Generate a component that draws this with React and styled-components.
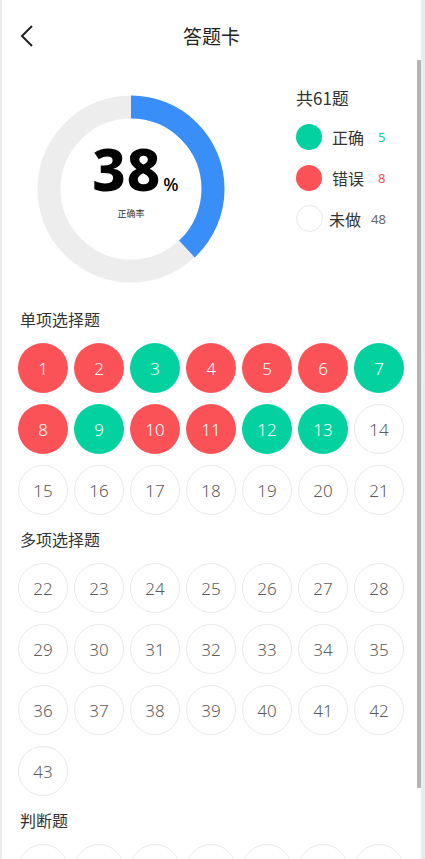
import * as React from "react";
import styled, { createGlobalStyle } from "styled-components";

const GlobalStyle = createGlobalStyle`
  html, body {
    margin: 0;
    padding: 0;
    background: #ececec;
    font-family: "Noto Sans", "Noto Sans CJK SC", sans-serif;
  }
`;

const colors = {
  right: "#03d19f",
  wrong: "#fb5258",
  blue: "#3a8ef8",
  track: "#ededed",
};

const sections = [
  {
    title: "单项选择题",
    from: 1,
    to: 21,
    status: { 1: "wrong", 2: "wrong", 3: "right", 4: "wrong", 5: "wrong", 6: "wrong", 7: "right", 8: "wrong", 9: "right", 10: "wrong", 11: "wrong", 12: "right", 13: "right" },
  },
  { title: "多项选择题", from: 22, to: 43, status: {} },
  { title: "判断题", from: 44, to: 50, status: {} },
];

const range = (a, b) => Array.from({ length: b - a + 1 }, (_, i) => a + i);

const Donut = ({ percent }) => {
  const r = 82;
  const c = 2 * Math.PI * r;
  return (
    <svg width="190" height="190" viewBox="0 0 190 190">
      <circle cx="95" cy="95" r={r} fill="none" stroke={colors.track} strokeWidth="23" />
      <circle
        cx="95"
        cy="95"
        r={r}
        fill="none"
        stroke={colors.blue}
        strokeWidth="23"
        strokeDasharray={`${(c * percent) / 100} ${c}`}
        transform="rotate(-90 95 95)"
      />
    </svg>
  );
};

export default function App() {
  return (
    <>
      <GlobalStyle />
      <Frame>
        <Header>
          <Back>
            <svg width="14" height="24" viewBox="0 0 14 24">
              <polyline points="12,2 2,12 12,22" fill="none" stroke="#222" strokeWidth="2" />
            </svg>
          </Back>
          <Title>答题卡</Title>
        </Header>

        <Summary>
          <Chart>
            <Donut percent={38} />
            <ChartLabel>
              <Big>
                38<Pct>%</Pct>
              </Big>
              <Caption>正确率</Caption>
            </ChartLabel>
          </Chart>
          <Legend>
            <Total>共61题</Total>
            <LegendRow>
              <Dot $color={colors.right} />
              <LegendText>正确</LegendText>
              <Count $color={colors.right}>5</Count>
            </LegendRow>
            <LegendRow>
              <Dot $color={colors.wrong} />
              <LegendText>错误</LegendText>
              <Count $color={colors.wrong}>8</Count>
            </LegendRow>
            <LegendRow $tight>
              <Dot $empty />
              <LegendText>未做</LegendText>
              <Count $color="#666">48</Count>
            </LegendRow>
          </Legend>
        </Summary>

        {sections.map((s) => (
          <Section key={s.title}>
            <SectionTitle>{s.title}</SectionTitle>
            <Grid>
              {range(s.from, s.to).map((n) => (
                <Ball key={n} $status={s.status[n]}>
                  {n <= 43 ? n : ""}
                </Ball>
              ))}
            </Grid>
          </Section>
        ))}
        <Thumb />
      </Frame>
    </>
  );
}

const Frame = styled.div`
  position: relative;
  margin-left: 2px;
  width: 419px;
  height: 859px;
  overflow: hidden;
  background: #fff;
`;

const Thumb = styled.div`
  position: absolute;
  left: 415px;
  top: 60px;
  width: 4px;
  height: 728px;
  background: #b4b4b4;
`;

const Header = styled.div`
  position: relative;
  height: 70px;
  display: flex;
  align-items: center;
  justify-content: center;
`;

const Back = styled.div`
  position: absolute;
  left: 18px;
  top: 24px;
  display: flex;
`;

const Title = styled.div`
  font-family: "Noto Sans CJK SC", sans-serif;
  font-size: 19px;
  color: #222;
`;

const Summary = styled.div`
  display: flex;
  padding: 24px 0 0 34px;
  height: 225px;
  box-sizing: border-box;
`;

const Chart = styled.div`
  position: relative;
  width: 190px;
  height: 190px;
`;

const ChartLabel = styled.div`
  position: absolute;
  inset: 0;
  display: flex;
  flex-direction: column;
  align-items: center;
  justify-content: center;
`;

const Big = styled.div`
  font-family: "Noto Sans", sans-serif;
  font-weight: 800;
  font-size: 58px;
  line-height: 48px;
  color: #000;
  letter-spacing: 1px;
  margin-left: 10px;
  margin-top: -14px;
`;

const Pct = styled.span`
  font-size: 18px;
  font-weight: 500;
  margin-left: 2px;
`;

const Caption = styled.div`
  font-family: "Noto Sans CJK SC", sans-serif;
  font-size: 9px;
  line-height: 12px;
  color: #333;
  margin-top: 0;
`;

const Legend = styled.div`
  margin-left: 70px;
  display: flex;
  flex-direction: column;
  margin-top: -8px;
`;

const Total = styled.div`
  font-family: "Noto Sans CJK SC", sans-serif;
  font-size: 17px;
  color: #333;
  height: 24px;
  line-height: 24px;
  margin-bottom: 6px;
`;

const LegendRow = styled.div`
  display: flex;
  align-items: center;
  height: 41px;
  gap: ${(p) => (p.$tight ? "6px" : "10px")};
`;

const Dot = styled.div`
  width: ${(p) => (p.$empty ? "25px" : "26px")};
  height: ${(p) => (p.$empty ? "25px" : "26px")};
  border-radius: 50%;
  background: ${(p) => (p.$empty ? "#fff" : p.$color)};
  border: ${(p) => (p.$empty ? "1px solid #e8e8e8" : "none")};
`;

const LegendText = styled.div`
  font-family: "Noto Sans CJK SC", sans-serif;
  font-size: 16px;
  color: #333;
`;

const Count = styled.div`
  font-size: 13px;
  color: ${(p) => p.$color};
  margin-left: 4px;
`;

const Section = styled.div`
  padding: 0 0 0 16px;
`;

const SectionTitle = styled.div`
  font-family: "Noto Sans CJK SC", sans-serif;
  font-size: 16px;
  color: #333;
  height: 22px;
  line-height: 22px;
  margin: 13px 0 13px 2px;
`;

const Grid = styled.div`
  display: grid;
  grid-template-columns: repeat(7, 50px);
  column-gap: 6px;
  row-gap: 11px;
`;

const Ball = styled.div`
  width: 50px;
  height: 50px;
  box-sizing: border-box;
  border-radius: 50%;
  display: flex;
  align-items: center;
  justify-content: center;
  font-family: "Noto Sans", sans-serif;
  font-size: 17px;
  font-weight: 300;
  background: ${(p) => (p.$status ? colors[p.$status] : "#fff")};
  color: ${(p) => (p.$status ? "#fff" : "#5c5c5c")};
  border: ${(p) => (p.$status ? "none" : "1px solid #e9e9e9")};
`;
